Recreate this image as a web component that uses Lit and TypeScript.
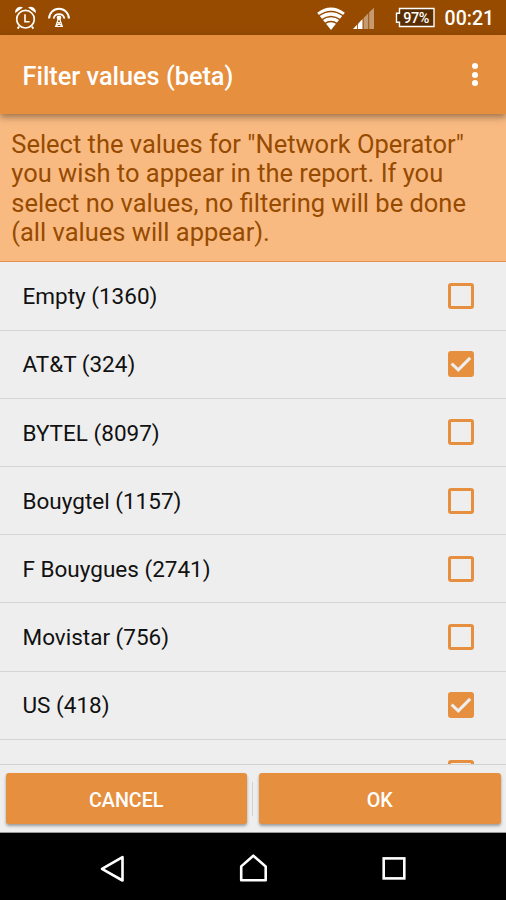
import { LitElement, html, css, svg } from "lit";
import { customElement, property, state } from "lit/decorators.js";
import { classMap } from "lit/directives/class-map.js";

interface Entry {
  name: string;
  count: number;
  checked: boolean;
}

@customElement("status-bar")
class StatusBar extends LitElement {
  static styles = css`
    :host {
      display: flex;
      height: 35px;
      background: #964b00;
      color: #fff;
    }
    svg {
      display: block;
      flex: none;
    }
    .clock {
      box-sizing: border-box;
      font: 500 19.5px/35px Roboto, sans-serif;
      padding: 1px 0 0 0.6px;
      width: 62px;
    }
    .left {
      flex: 1;
    }
    .battery-text {
      font: 500 14.4px Roboto, sans-serif;
      fill: #fff;
    }
  `;

  render() {
    return html`
      <svg class="left" height="35" viewBox="0 0 310 35" preserveAspectRatio="xMinYMin" fill="none" stroke="#fff">
        <circle cx="25.5" cy="19.2" r="8.8" stroke-width="1.7" />
        <path d="M25 14.3V21.8H29.6" stroke-width="1.6" />
        <path d="M19.2 26.5L17.6 28.6M31.8 26.5L33.4 28.6" stroke-width="1.8" />
        <path d="M15.3 13.1C14.2 9.2 19 4.8 23 7.6Z" fill="#fff" stroke="none" />
        <path d="M35.7 13.1C36.8 9.2 32 4.8 28 7.6Z" fill="#fff" stroke="none" />
        <path d="M49.1 18.6A9.9 9.9 0 0 1 68.9 18.6" stroke-width="2" />
        <path d="M53.6 18.6A5.5 5.5 0 0 1 64.4 18.6" stroke-width="1.8" />
        <circle cx="59" cy="17.8" r="2.3" fill="#fff" stroke="none" />
        <path d="M58.3 19L55.7 26.5H62.3L59.7 19M57.2 21.7L61.8 26M60.8 21.7L56.2 26" stroke-width="1.2" />
      </svg>
      <svg width="134" height="35" viewBox="310 0 134 35">
        <path d="M317.2 12.8Q331 2.2 344.8 12.8L331 30Z" fill="#fff" />
        <g fill="none" stroke="#964b00" stroke-width="1.5">
          <path d="M318.5 16Q331 6.8 343.5 16" />
          <path d="M321.5 19.9Q331 13 340.5 19.9" />
          <path d="M324.5 23.8Q331 19.3 337.5 23.8" />
        </g>
        <path d="M353 29L357.2 24.6V29Z" fill="#fff" />
        <path d="M358 23.8L362.5 19V29H358Z" fill="#fff" />
        <path d="M363.6 17.9L368.3 13.2V29H363.6ZM369.2 12.3L374 7.8V29H369.2Z" fill="#c69a70" />
        <path d="M399.5 8.5H434V26.5H399.5V22.2H396.5V13.2H399.5Z" fill="#5a2d00" stroke="#fff" stroke-width="1.4" />
        <text class="battery-text" x="403.3" y="22.6" textLength="26">97%</text>
      </svg>
      <div class="clock">00:21</div>
    `;
  }
}

@customElement("check-box")
class CheckBox extends LitElement {
  @property({ type: Boolean }) checked = false;

  static styles = css`
    :host {
      display: block;
      width: 26px;
      height: 26px;
    }
    .box {
      box-sizing: border-box;
      width: 26px;
      height: 26px;
      border: 3px solid #e68f3e;
      border-radius: 3px;
    }
    .on {
      background: #e68f3e;
    }
    svg {
      display: block;
      margin: -3px;
    }
  `;

  render() {
    return html`<div class=${classMap({ box: true, on: this.checked })}>
      ${this.checked
        ? html`<svg width="26" height="26" viewBox="0 0 26 26">
            <path d="M3.6 12.6L10.3 18.8L22.2 6.9" fill="none" stroke="#eee" stroke-width="3" />
          </svg>`
        : null}
    </div>`;
  }
}

@customElement("app-root")
class AppRoot extends LitElement {
  @state() private entries: Entry[] = [
    { name: "Empty", count: 1360, checked: false },
    { name: "AT&T", count: 324, checked: true },
    { name: "BYTEL", count: 8097, checked: false },
    { name: "Bouygtel", count: 1157, checked: false },
    { name: "F Bouygues", count: 2741, checked: false },
    { name: "Movistar", count: 756, checked: false },
    { name: "US", count: 418, checked: true },
    { name: "Vodafone es", count: 12, checked: false },
  ];

  static styles = css`
    :host {
      display: flex;
      flex-direction: column;
      height: 900px;
      overflow: hidden;
      background: #eee;
      font-family: Roboto, sans-serif;
    }
    .appbar {
      flex: none;
      display: flex;
      align-items: center;
      justify-content: space-between;
      box-sizing: border-box;
      height: 79px;
      padding: 3px 28px 0 22.5px;
      background: #e68f3e;
      color: #fff;
      font-weight: 500;
      font-size: 25.3px;
      z-index: 1;
      box-shadow: 0 3px 7px rgba(60, 40, 20, 0.5);
    }
    .more {
      display: flex;
      flex-direction: column;
      gap: 2.4px;
      padding-bottom: 3px;
    }
    .dot {
      width: 6px;
      height: 6px;
      border-radius: 50%;
      background: #fff;
    }
    .hint {
      flex: none;
      box-sizing: border-box;
      height: 148px;
      padding: 15.5px 0 0 11.3px;
      background: #f9ba82;
      border-bottom: 1.5px solid #e0924e;
      color: #964b00;
      font-size: 25.47px;
      line-height: 29.5px;
      white-space: nowrap;
    }
    .list {
      flex: 1;
      min-height: 0;
      overflow: hidden;
      padding-top: 0.5px;
    }
    .row {
      display: flex;
      align-items: center;
      justify-content: space-between;
      box-sizing: border-box;
      height: 68.2px;
      padding: 0 32px 0 22.5px;
      border-bottom: 1px solid #d5d5d5;
      color: #111;
      font-size: 22.5px;
    }
    .row span {
      padding-top: 0.4px;
    }
    .footer {
      flex: none;
      display: flex;
      box-sizing: border-box;
      height: 69px;
      padding: 8px 5.5px 0 5.5px;
      border-top: 1px solid #d2d2d2;
      border-bottom: 1px solid #999;
    }
    .button {
      flex: 1;
      height: 51px;
      border-radius: 3px;
      background: #e68f3e;
      color: #fff;
      font-weight: 500;
      font-size: 19.7px;
      line-height: 55px;
      text-align: center;
      box-shadow: 0 2px 3px rgba(0, 0, 0, 0.35);
    }
    .split {
      width: 1px;
      height: 34px;
      margin: 9px 6px 0 5px;
      background: #d2d2d2;
    }
    .nav {
      flex: none;
      display: block;
      height: 67px;
      background: #000;
    }
  `;

  private toggle(index: number) {
    this.entries = this.entries.map((e, i) => (i === index ? { ...e, checked: !e.checked } : e));
  }

  render() {
    return html`
      <status-bar></status-bar>
      <div class="appbar">
        <span>Filter values (beta)</span>
        <div class="more"><div class="dot"></div><div class="dot"></div><div class="dot"></div></div>
      </div>
      <div class="hint">
        Select the values for "Network Operator"<br />you wish to appear in the report. If you<br />select no values,
        no filtering will be done<br />(all values will appear).
      </div>
      <div class="list">
        ${this.entries.map(
          (e, i) => html`<div class="row" @click=${() => this.toggle(i)}>
            <span>${e.name} (${e.count})</span>
            <check-box ?checked=${e.checked}></check-box>
          </div>`
        )}
      </div>
      <div class="footer">
        <div class="button">CANCEL</div>
        <div class="split"></div>
        <div class="button">OK</div>
      </div>
      <svg class="nav" width="506" height="67" viewBox="0 833 506 67" fill="none" stroke="#fff" stroke-width="2.6">
        ${svg`<path d="M122.5 857.2V880.5L102 868.8Z" stroke-linejoin="round" />
        <path d="M241.2 880.3V866.4L253.3 855.7L265.7 866.4V880.3Z" stroke-linejoin="round" />
        <rect x="383.7" y="858.4" width="20.6" height="20" />`}
      </svg>
    `;
  }
}
